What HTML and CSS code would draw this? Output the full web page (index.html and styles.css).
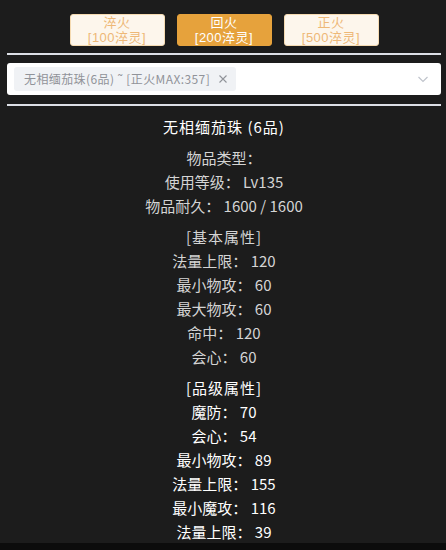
FILE: index.html
```html
<!DOCTYPE html>
<html lang="zh">
<head>
<meta charset="utf-8">
<link rel="stylesheet" href="styles.css">
</head>
<body>
<div class="page">
  <div class="btns">
    <div class="btn"><span>淬火</span><span>[100淬灵]</span></div>
    <div class="btn active"><span>回火</span><span>[200淬灵]</span></div>
    <div class="btn"><span>正火</span><span>[500淬灵]</span></div>
  </div>
  <div class="divider"></div>
  <div class="select">
    <div class="tag"><span class="tag-text">无相缅茄珠(6品) ˜ [正火MAX:357]</span><svg class="tag-close" width="10" height="10" viewBox="0 0 10 10"><path d="M1.5 1.5 L8.5 8.5 M8.5 1.5 L1.5 8.5" stroke="#909399" stroke-width="1.1" fill="none"/></svg></div>
    <svg class="chev" width="12" height="12" viewBox="0 0 12 12"><path d="M1.5 4 L6 8.5 L10.5 4" fill="none" stroke="#c0c4cc" stroke-width="1.2"/></svg>
  </div>
  <div class="divider d2"></div>
  <div class="info">
    <div class="title">无相缅茄珠 (6品)</div>
    <div class="group">
      <div class="row">物品类型：</div>
      <div class="row">使用等级： Lv135</div>
      <div class="row">物品耐久： 1600 / 1600</div>
    </div>
    <div class="group">
      <div class="row head">[基本属性]</div>
      <div class="row">法量上限： 120</div>
      <div class="row">最小物攻： 60</div>
      <div class="row">最大物攻： 60</div>
      <div class="row">命中： 120</div>
      <div class="row">会心： 60</div>
    </div>
    <div class="group bright">
      <div class="row head">[品级属性]</div>
      <div class="row">魔防： 70</div>
      <div class="row">会心： 54</div>
      <div class="row">最小物攻： 89</div>
      <div class="row">法量上限： 155</div>
      <div class="row">最小魔攻： 116</div>
      <div class="row">法量上限： 39</div>
    </div>
  </div>
</div>
<div class="bottombar"></div>
</body>
</html>
```
FILE: styles.css
```css
html, body {
  margin: 0;
  padding: 0;
  background: #1c1c1c;
  height: 100%;
  overflow: hidden;
}
body {
  font-family: "Noto Sans CJK SC", "Noto Sans", sans-serif;
}
.page {
  padding: 14px 5px 0 7px;
}
.btns {
  display: flex;
  justify-content: center;
  gap: 12px;
}
.btn {
  width: 95px;
  height: 32px;
  box-sizing: border-box;
  background: #fdf6ec;
  border: 1px solid #f5dab1;
  border-radius: 3px;
  color: #eeb877;
  font-family: "Liberation Sans", "Noto Sans CJK SC", sans-serif;
  font-size: 13px;
  letter-spacing: 0.5px;
  display: flex;
  flex-direction: column;
  align-items: center;
  justify-content: center;
}
.btn span {
  display: block;
  height: 15px;
  line-height: 15px;
}
.btn.active {
  background: #e6a23c;
  border-color: #e6a23c;
  color: #fff;
}
.divider {
  height: 2px;
  background: #dcdfe6;
  margin-top: 7px;
}
.d2 {
  margin-top: 9px;
}
.select {
  margin-top: 8px;
  height: 32px;
  box-sizing: border-box;
  background: #fff;
  border-radius: 3px;
  display: flex;
  align-items: center;
  padding: 0 12px 0 7px;
}
.tag {
  height: 24px;
  background: #f0f2f5;
  border-radius: 3px;
  display: flex;
  align-items: center;
  padding: 0 8px 0 10px;
  color: #909399;
  font-size: 12px;
  letter-spacing: 0.4px;
  gap: 8px;
}
.tag-close {
  display: block;
}
.chev {
  margin-left: auto;
}
.info {
  margin-top: 9px;
  text-align: center;
  color: #d4d4d4;
  font-size: 15px;
  line-height: 24px;
}
.title {
  color: #ffffff;
  letter-spacing: 1px;
}
.head {
  letter-spacing: 1px;
}
.group {
  margin-top: 7px;
}
.bright {
  color: #ffffff;
}
.bottombar {
  position: fixed;
  left: 0;
  right: 0;
  bottom: 0;
  height: 7px;
  background: #0c0c0c;
}
```
